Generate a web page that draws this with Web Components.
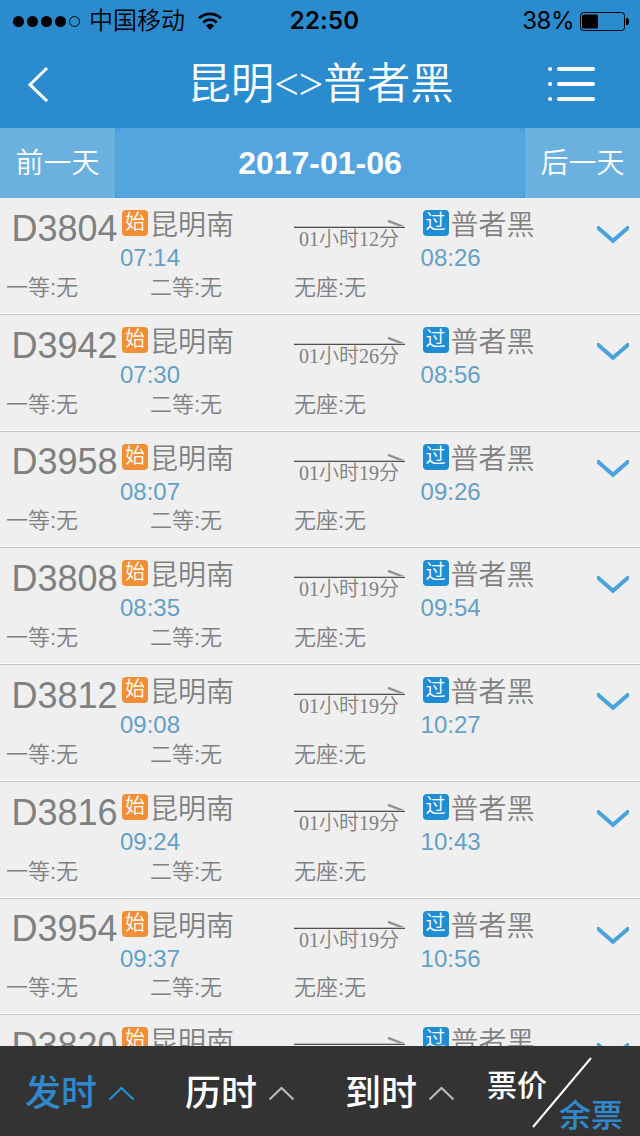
<!DOCTYPE html>
<html lang="zh-CN">
<head>
<meta charset="utf-8">
<title>昆明 普者黑</title>
<style>
html,body{margin:0;height:1136px;overflow:hidden}
body{background:#efefef;font-family:"Liberation Sans","Noto Sans CJK SC",sans-serif;--blue:#2a8ccf;width:640px}
</style>
</head>
<body>
<train-app></train-app>
<script>
const define = (name, html, fill) => customElements.define(name, class extends HTMLElement {
  connectedCallback() {
    if (this.shadowRoot) return;
    const root = this.attachShadow({ mode: 'open' });
    const t = document.createElement('template');
    t.innerHTML = html;
    root.append(t.content.cloneNode(true));
    if (fill) fill(this, root);
  }
});

define('status-bar', `
<style>
:host{display:grid;grid-template-columns:1fr auto 1fr;align-items:center;height:40px;box-sizing:border-box;padding:0 11px 0 13px;color:#000;font-size:24px;line-height:44px;font-weight:350}
.side{display:flex;align-items:center;height:40px}
.dots{margin-right:8px}
.wifi{margin-left:12px}
.right{justify-content:flex-end}
.time{font:600 24px/42px Inter,sans-serif;letter-spacing:.2px;padding-left:7px}
.pct{font:400 24px/42px Inter,sans-serif;margin-right:6px;letter-spacing:-.5px}
svg{display:block;flex:none}
</style>
<div class="side">
<svg class="dots" width="68" height="12"><g fill="#000"><circle cx="5.5" cy="6.5" r="5.5"/><circle cx="19.5" cy="6.5" r="5.5"/><circle cx="33.5" cy="6.5" r="5.5"/><circle cx="47.5" cy="6.5" r="5.5"/></g><circle cx="61.5" cy="6.5" r="5" fill="none" stroke="#000"/></svg>
<span>中国移动</span>
<svg class="wifi" width="26" height="20" viewBox="0 0 26 20"><g fill="none" stroke="#000" stroke-width="2.8"><path d="M2 7.2A16 16 0 0 1 24 7.2"/><path d="M6.3 11.4A9.7 9.7 0 0 1 19.7 11.4"/></g><path d="M8.8 14.4Q13 11.2 17.2 14.4L13 19Z"/></svg>
</div>
<span class="time">22:50</span>
<div class="side right"><span class="pct">38%</span>
<svg width="49" height="20"><rect x=".5" y="1.5" width="44" height="18" rx="3" fill="none" stroke="#000"/><rect x="2" y="3.5" width="16" height="14" rx="1.5"/><path d="M46 7h1q2 0 2 3.5t-2 3.5h-1z"/></svg></div>`);

define('nav-bar', `
<style>
:host{display:grid;grid-template-columns:120px 1fr 120px;align-items:center;height:88px;color:#fff}
svg{display:block}
.back{margin-left:27px}.menu{margin-left:27px}
.title{text-align:center;font:350 43.5px/89px "Liberation Serif","Noto Sans CJK SC",sans-serif;height:88px;white-space:nowrap;padding-left:1px}
</style>
<svg class="back" width="22" height="36" viewBox="0 0 22 36"><path d="M20 2L3 18.7L20 35" fill="none" stroke="#fff" stroke-width="3"/></svg>
<div class="title"><slot></slot></div>
<svg class="menu" width="49" height="36" viewBox="0 0 49 36"><g stroke="#fff" stroke-width="4" stroke-linecap="round"><path d="M12 3H46M12 18H46M12 33H46"/><path d="M3 3h.1M3 18h.1M3 33h.1"/></g></svg>`);

define('date-bar', `
<style>
:host{display:grid;grid-template-columns:115px 410px 115px;height:70px;color:#fff;text-align:center;background:#6bb1e0}
.day{font-size:28px;line-height:72px;height:70px;font-weight:350}
.mid{background:#4a9fda}
.date{height:70px;box-sizing:border-box;border-radius:9px;background:#54a5de;font-size:32px;font-weight:bold;line-height:70px}
</style>
<div class="day">前一天</div><div class="mid"><div class="date"><slot></slot></div></div><div class="day">后一天</div>`);

define('station-stop', `
<style>
:host{display:block;padding-top:12px}
.name{display:flex;height:30px;font-size:28px;line-height:32px;font-weight:350;color:#808080}
.badge{flex:none;width:26px;height:26px;margin:0 2px;border-radius:4px;background:var(--badge);color:#fff;font-size:20px;line-height:24px;text-align:center}
.time{height:36px;line-height:36px;font-size:24px;color:#64a0c6}
</style>
<div class="name"><span class="badge"></span><span class="label"></span></div><div class="time"></div>`,
(el, root) => {
  const kind = el.getAttribute('kind');
  el.style.setProperty('--badge', kind === '始' ? '#f08f35' : '#1e8dd3');
  root.querySelector('.badge').textContent = kind;
  root.querySelector('.label').textContent = el.getAttribute('name');
  root.querySelector('.time').textContent = el.getAttribute('time') || '';
});

define('trip-length', `
<style>
:host{display:block;padding-top:20px;width:110px;text-align:center;font:350 20px/22px "Liberation Serif","Noto Sans CJK SC",serif;color:#808080;white-space:nowrap}
svg{display:block}
</style>
<svg width="111" height="10" style="overflow:visible"><path d="M94 2.8L110 9" stroke="#909090" stroke-width="2.4" fill="none"/><path d="M0 8.5H110" stroke="#c0c0c0"/><path d="M0 9.5H111" stroke="#505050"/></svg><slot></slot>`);

define('train-row', `
<style>
:host{display:block;box-sizing:border-box;height:117px;background:#efefef;border-bottom:1px solid #c5c5c5;box-shadow:inset 0 -1px #fff;color:#808080;overflow:hidden}
:host([short]){height:116px}
.top{display:grid;grid-template-columns:120px 174px 126px 177px 43px;height:77px}
.code{padding-left:11.5px;font-size:36px;line-height:61px}
.to{margin-left:.6px}
.chev{display:block;margin-top:28px}
.seats{display:grid;grid-template-columns:144px 144px 1fr;padding-left:6px;font-size:22px;line-height:26px;font-weight:350}
:host([short]) .top{height:76px}
:host([short]) .code{line-height:59px}
</style>
<div class="top"><div class="code"></div><station-stop class="from" kind="始" name="昆明南"></station-stop><trip-length></trip-length><station-stop class="to" kind="过" name="普者黑"></station-stop>
<svg class="chev" width="32" height="18"><path d="M-1 0L16 14.8L33 0" fill="none" stroke="#4ba3dc" stroke-width="4"/></svg></div>
<div class="seats"><span>一等:无</span><span>二等:无</span><span>无座:无</span></div>`,
(el, root) => {
  root.querySelector('.code').textContent = el.getAttribute('code');
  const trip = root.querySelector('trip-length');
  const minutes = el.getAttribute('minutes');
  if (minutes) trip.textContent = '01小时' + minutes + '分';
  else root.querySelector('.seats').remove();
  for (const [cls, attr] of [['.from', 'depart'], ['.to', 'arrive']]) {
    const old = root.querySelector(cls), fresh = document.createElement('station-stop');
    for (const a of old.attributes) if (a.name !== 'style') fresh.setAttribute(a.name, a.value);
    fresh.setAttribute('time', el.getAttribute(attr) || '');
    old.replaceWith(fresh);
  }
});

define('sort-tab', `
<style>
:host{display:flex;align-items:flex-start;width:160px;height:90px;box-sizing:border-box;padding-left:25px;font-size:36px;font-weight:500;color:#fff;--arrow:#bdbdbd}
:host([active]){color:#3189cd;--arrow:#2491d5}
span{padding-top:21px;line-height:54px}
svg{margin:40px 0 0 11px}
</style>
<span><slot></slot></span><svg width="27" height="16"><path d="M1.5 13.5L13.5 2L25.5 13.5" fill="none" stroke="var(--arrow)" stroke-width="2"/></svg>`);

define('price-toggle', `
<style>
:host{display:grid;position:relative;width:160px;height:90px;font-weight:500}
.a,.b{grid-area:1/1}
.a{padding-left:7px;font-size:30px;line-height:80px;color:#fff}
.b{padding-left:79px;padding-top:50px;font-size:32px;line-height:40px;color:#3189cd}
svg{position:absolute;inset:0}
</style>
<span class="a">票价</span><span class="b">余票</span><svg width="160" height="90"><path d="M53 81L111 12" stroke="#fff" stroke-width="2"/></svg>`);

define('tab-bar', `
<style>:host{display:flex;height:90px;flex:none;background:#333}</style>
<sort-tab active>发时</sort-tab><sort-tab>历时</sort-tab><sort-tab>到时</sort-tab><price-toggle></price-toggle>`);

const trains = [
  { code: 'D3804', depart: '07:14', arrive: '08:26', minutes: 12 },
  { code: 'D3942', depart: '07:30', arrive: '08:56', minutes: 26 },
  { code: 'D3958', depart: '08:07', arrive: '09:26', minutes: 19, short: '' },
  { code: 'D3808', depart: '08:35', arrive: '09:54', minutes: 19 },
  { code: 'D3812', depart: '09:08', arrive: '10:27', minutes: 19 },
  { code: 'D3816', depart: '09:24', arrive: '10:43', minutes: 19 },
  { code: 'D3954', depart: '09:37', arrive: '10:56', minutes: 19, short: '' },
  { code: 'D3820' }
];
define('train-app', `
<style>
:host{display:flex;flex-direction:column;width:640px;height:1136px}
header{background:var(--blue)}
main{flex:1;min-height:0;overflow:hidden}
</style>
<header><status-bar></status-bar><nav-bar>昆明&lt;&gt;普者黑</nav-bar></header>
<date-bar>2017-01-06</date-bar><main></main><tab-bar></tab-bar>`,
(el, root) => {
  const list = root.querySelector('main');
  for (const train of trains) {
    const row = document.createElement('train-row');
    for (const [k, v] of Object.entries(train)) row.setAttribute(k, v);
    list.append(row);
  }
});
</script>
</body>
</html>
